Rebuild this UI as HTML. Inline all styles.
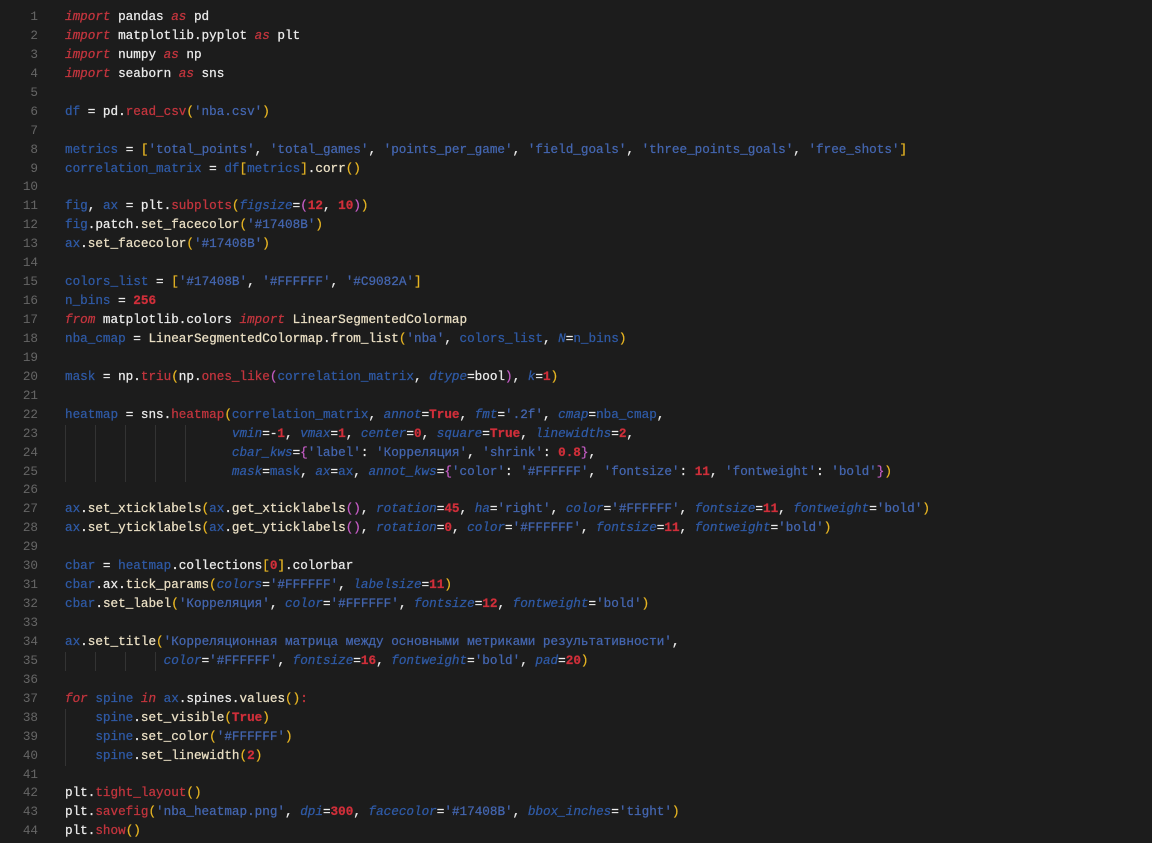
<!DOCTYPE html>
<html><head><meta charset="utf-8"><style>
body{margin:0;background:#1c1c1c;width:1152px;height:843px;overflow:hidden}
.c{position:absolute;left:0;top:8px;font-family:"Liberation Mono",monospace;font-size:12.65px;line-height:18.95px;color:#ececec;-webkit-text-stroke:0.25px}
.l{height:18.95px;position:relative;white-space:pre}
.n{display:inline-block;width:38px;text-align:right;color:#666;margin-right:27px;-webkit-text-stroke:0}
.k{color:#c4353e;font-style:italic}
.v{color:#2f5aa6}
.s{color:#4466b0}
.d{color:#d02f3a;font-weight:bold}
.m{color:#eadfc4}
.f{color:#c4353e}
.p{color:#e6b422}
.q{color:#c45cc4}
.a{color:#2f5aa6;font-style:italic}
.g{position:absolute;top:0;width:1px;height:19px;background:#333}
</style></head><body><div class="c"><div class="l"><span class="n">1</span><span class="k">import</span> pandas <span class="k">as</span> pd</div><div class="l"><span class="n">2</span><span class="k">import</span> matplotlib.pyplot <span class="k">as</span> plt</div><div class="l"><span class="n">3</span><span class="k">import</span> numpy <span class="k">as</span> np</div><div class="l"><span class="n">4</span><span class="k">import</span> seaborn <span class="k">as</span> sns</div><div class="l"><span class="n">5</span></div><div class="l"><span class="n">6</span><span class="v">df</span> = pd.<span class="f">read_csv</span><span class="p">(</span><span class="s">'nba.csv'</span><span class="p">)</span></div><div class="l"><span class="n">7</span></div><div class="l"><span class="n">8</span><span class="v">metrics</span> = <span class="p">[</span><span class="s">'total_points'</span>, <span class="s">'total_games'</span>, <span class="s">'points_per_game'</span>, <span class="s">'field_goals'</span>, <span class="s">'three_points_goals'</span>, <span class="s">'free_shots'</span><span class="p">]</span></div><div class="l"><span class="n">9</span><span class="v">correlation_matrix</span> = <span class="v">df</span><span class="p">[</span><span class="v">metrics</span><span class="p">]</span>.<span class="m">corr</span><span class="p">()</span></div><div class="l"><span class="n">10</span></div><div class="l"><span class="n">11</span><span class="v">fig</span>, <span class="v">ax</span> = plt.<span class="f">subplots</span><span class="p">(</span><span class="a">figsize</span>=<span class="q">(</span><span class="d">12</span>, <span class="d">10</span><span class="q">)</span><span class="p">)</span></div><div class="l"><span class="n">12</span><span class="v">fig</span>.patch.<span class="m">set_facecolor</span><span class="p">(</span><span class="s">'#17408B'</span><span class="p">)</span></div><div class="l"><span class="n">13</span><span class="v">ax</span>.<span class="m">set_facecolor</span><span class="p">(</span><span class="s">'#17408B'</span><span class="p">)</span></div><div class="l"><span class="n">14</span></div><div class="l"><span class="n">15</span><span class="v">colors_list</span> = <span class="p">[</span><span class="s">'#17408B'</span>, <span class="s">'#FFFFFF'</span>, <span class="s">'#C9082A'</span><span class="p">]</span></div><div class="l"><span class="n">16</span><span class="v">n_bins</span> = <span class="d">256</span></div><div class="l"><span class="n">17</span><span class="k">from</span> matplotlib.colors <span class="k">import</span> <span class="m">LinearSegmentedColormap</span></div><div class="l"><span class="n">18</span><span class="v">nba_cmap</span> = <span class="m">LinearSegmentedColormap</span>.<span class="m">from_list</span><span class="p">(</span><span class="s">'nba'</span>, <span class="v">colors_list</span>, <span class="a">N</span>=<span class="v">n_bins</span><span class="p">)</span></div><div class="l"><span class="n">19</span></div><div class="l"><span class="n">20</span><span class="v">mask</span> = np.<span class="f">triu</span><span class="p">(</span>np.<span class="f">ones_like</span><span class="q">(</span><span class="v">correlation_matrix</span>, <span class="a">dtype</span>=bool<span class="q">)</span>, <span class="a">k</span>=<span class="d">1</span><span class="p">)</span></div><div class="l"><span class="n">21</span></div><div class="l"><span class="n">22</span><span class="v">heatmap</span> = sns.<span class="f">heatmap</span><span class="p">(</span><span class="v">correlation_matrix</span>, <span class="a">annot</span>=<span class="d">True</span>, <span class="a">fmt</span>=<span class="s">'.2f'</span>, <span class="a">cmap</span>=<span class="v">nba_cmap</span>,</div><div class="l"><span class="n">23</span><span class="g" style="left:65px"></span><span class="g" style="left:95px"></span><span class="g" style="left:125px"></span><span class="g" style="left:155px"></span><span class="g" style="left:185px"></span>                      <span class="a">vmin</span>=-<span class="d">1</span>, <span class="a">vmax</span>=<span class="d">1</span>, <span class="a">center</span>=<span class="d">0</span>, <span class="a">square</span>=<span class="d">True</span>, <span class="a">linewidths</span>=<span class="d">2</span>,</div><div class="l"><span class="n">24</span><span class="g" style="left:65px"></span><span class="g" style="left:95px"></span><span class="g" style="left:125px"></span><span class="g" style="left:155px"></span><span class="g" style="left:185px"></span>                      <span class="a">cbar_kws</span>=<span class="q">{</span><span class="s">'label'</span>: <span class="s">'Корреляция'</span>, <span class="s">'shrink'</span>: <span class="d">0.8</span><span class="q">}</span>,</div><div class="l"><span class="n">25</span><span class="g" style="left:65px"></span><span class="g" style="left:95px"></span><span class="g" style="left:125px"></span><span class="g" style="left:155px"></span><span class="g" style="left:185px"></span>                      <span class="a">mask</span>=<span class="v">mask</span>, <span class="a">ax</span>=<span class="v">ax</span>, <span class="a">annot_kws</span>=<span class="q">{</span><span class="s">'color'</span>: <span class="s">'#FFFFFF'</span>, <span class="s">'fontsize'</span>: <span class="d">11</span>, <span class="s">'fontweight'</span>: <span class="s">'bold'</span><span class="q">}</span><span class="p">)</span></div><div class="l"><span class="n">26</span></div><div class="l"><span class="n">27</span><span class="v">ax</span>.<span class="m">set_xticklabels</span><span class="p">(</span><span class="v">ax</span>.<span class="m">get_xticklabels</span><span class="q">()</span>, <span class="a">rotation</span>=<span class="d">45</span>, <span class="a">ha</span>=<span class="s">'right'</span>, <span class="a">color</span>=<span class="s">'#FFFFFF'</span>, <span class="a">fontsize</span>=<span class="d">11</span>, <span class="a">fontweight</span>=<span class="s">'bold'</span><span class="p">)</span></div><div class="l"><span class="n">28</span><span class="v">ax</span>.<span class="m">set_yticklabels</span><span class="p">(</span><span class="v">ax</span>.<span class="m">get_yticklabels</span><span class="q">()</span>, <span class="a">rotation</span>=<span class="d">0</span>, <span class="a">color</span>=<span class="s">'#FFFFFF'</span>, <span class="a">fontsize</span>=<span class="d">11</span>, <span class="a">fontweight</span>=<span class="s">'bold'</span><span class="p">)</span></div><div class="l"><span class="n">29</span></div><div class="l"><span class="n">30</span><span class="v">cbar</span> = <span class="v">heatmap</span>.collections<span class="p">[</span><span class="d">0</span><span class="p">]</span>.colorbar</div><div class="l"><span class="n">31</span><span class="v">cbar</span>.ax.<span class="m">tick_params</span><span class="p">(</span><span class="a">colors</span>=<span class="s">'#FFFFFF'</span>, <span class="a">labelsize</span>=<span class="d">11</span><span class="p">)</span></div><div class="l"><span class="n">32</span><span class="v">cbar</span>.<span class="m">set_label</span><span class="p">(</span><span class="s">'Корреляция'</span>, <span class="a">color</span>=<span class="s">'#FFFFFF'</span>, <span class="a">fontsize</span>=<span class="d">12</span>, <span class="a">fontweight</span>=<span class="s">'bold'</span><span class="p">)</span></div><div class="l"><span class="n">33</span></div><div class="l"><span class="n">34</span><span class="v">ax</span>.<span class="m">set_title</span><span class="p">(</span><span class="s">'Корреляционная матрица между основными метриками результативности'</span>,</div><div class="l"><span class="n">35</span><span class="g" style="left:65px"></span><span class="g" style="left:95px"></span><span class="g" style="left:125px"></span><span class="g" style="left:155px"></span>             <span class="a">color</span>=<span class="s">'#FFFFFF'</span>, <span class="a">fontsize</span>=<span class="d">16</span>, <span class="a">fontweight</span>=<span class="s">'bold'</span>, <span class="a">pad</span>=<span class="d">20</span><span class="p">)</span></div><div class="l"><span class="n">36</span></div><div class="l"><span class="n">37</span><span class="k">for</span> <span class="v">spine</span> <span class="k">in</span> <span class="v">ax</span>.spines.<span class="m">values</span><span class="p">()</span><span class="f">:</span></div><div class="l"><span class="n">38</span><span class="g" style="left:65px"></span>    <span class="v">spine</span>.<span class="m">set_visible</span><span class="p">(</span><span class="d">True</span><span class="p">)</span></div><div class="l"><span class="n">39</span><span class="g" style="left:65px"></span>    <span class="v">spine</span>.<span class="m">set_color</span><span class="p">(</span><span class="s">'#FFFFFF'</span><span class="p">)</span></div><div class="l"><span class="n">40</span><span class="g" style="left:65px"></span>    <span class="v">spine</span>.<span class="m">set_linewidth</span><span class="p">(</span><span class="d">2</span><span class="p">)</span></div><div class="l"><span class="n">41</span></div><div class="l"><span class="n">42</span>plt.<span class="f">tight_layout</span><span class="p">()</span></div><div class="l"><span class="n">43</span>plt.<span class="f">savefig</span><span class="p">(</span><span class="s">'nba_heatmap.png'</span>, <span class="a">dpi</span>=<span class="d">300</span>, <span class="a">facecolor</span>=<span class="s">'#17408B'</span>, <span class="a">bbox_inches</span>=<span class="s">'tight'</span><span class="p">)</span></div><div class="l"><span class="n">44</span>plt.<span class="f">show</span><span class="p">()</span></div></div></body></html>
